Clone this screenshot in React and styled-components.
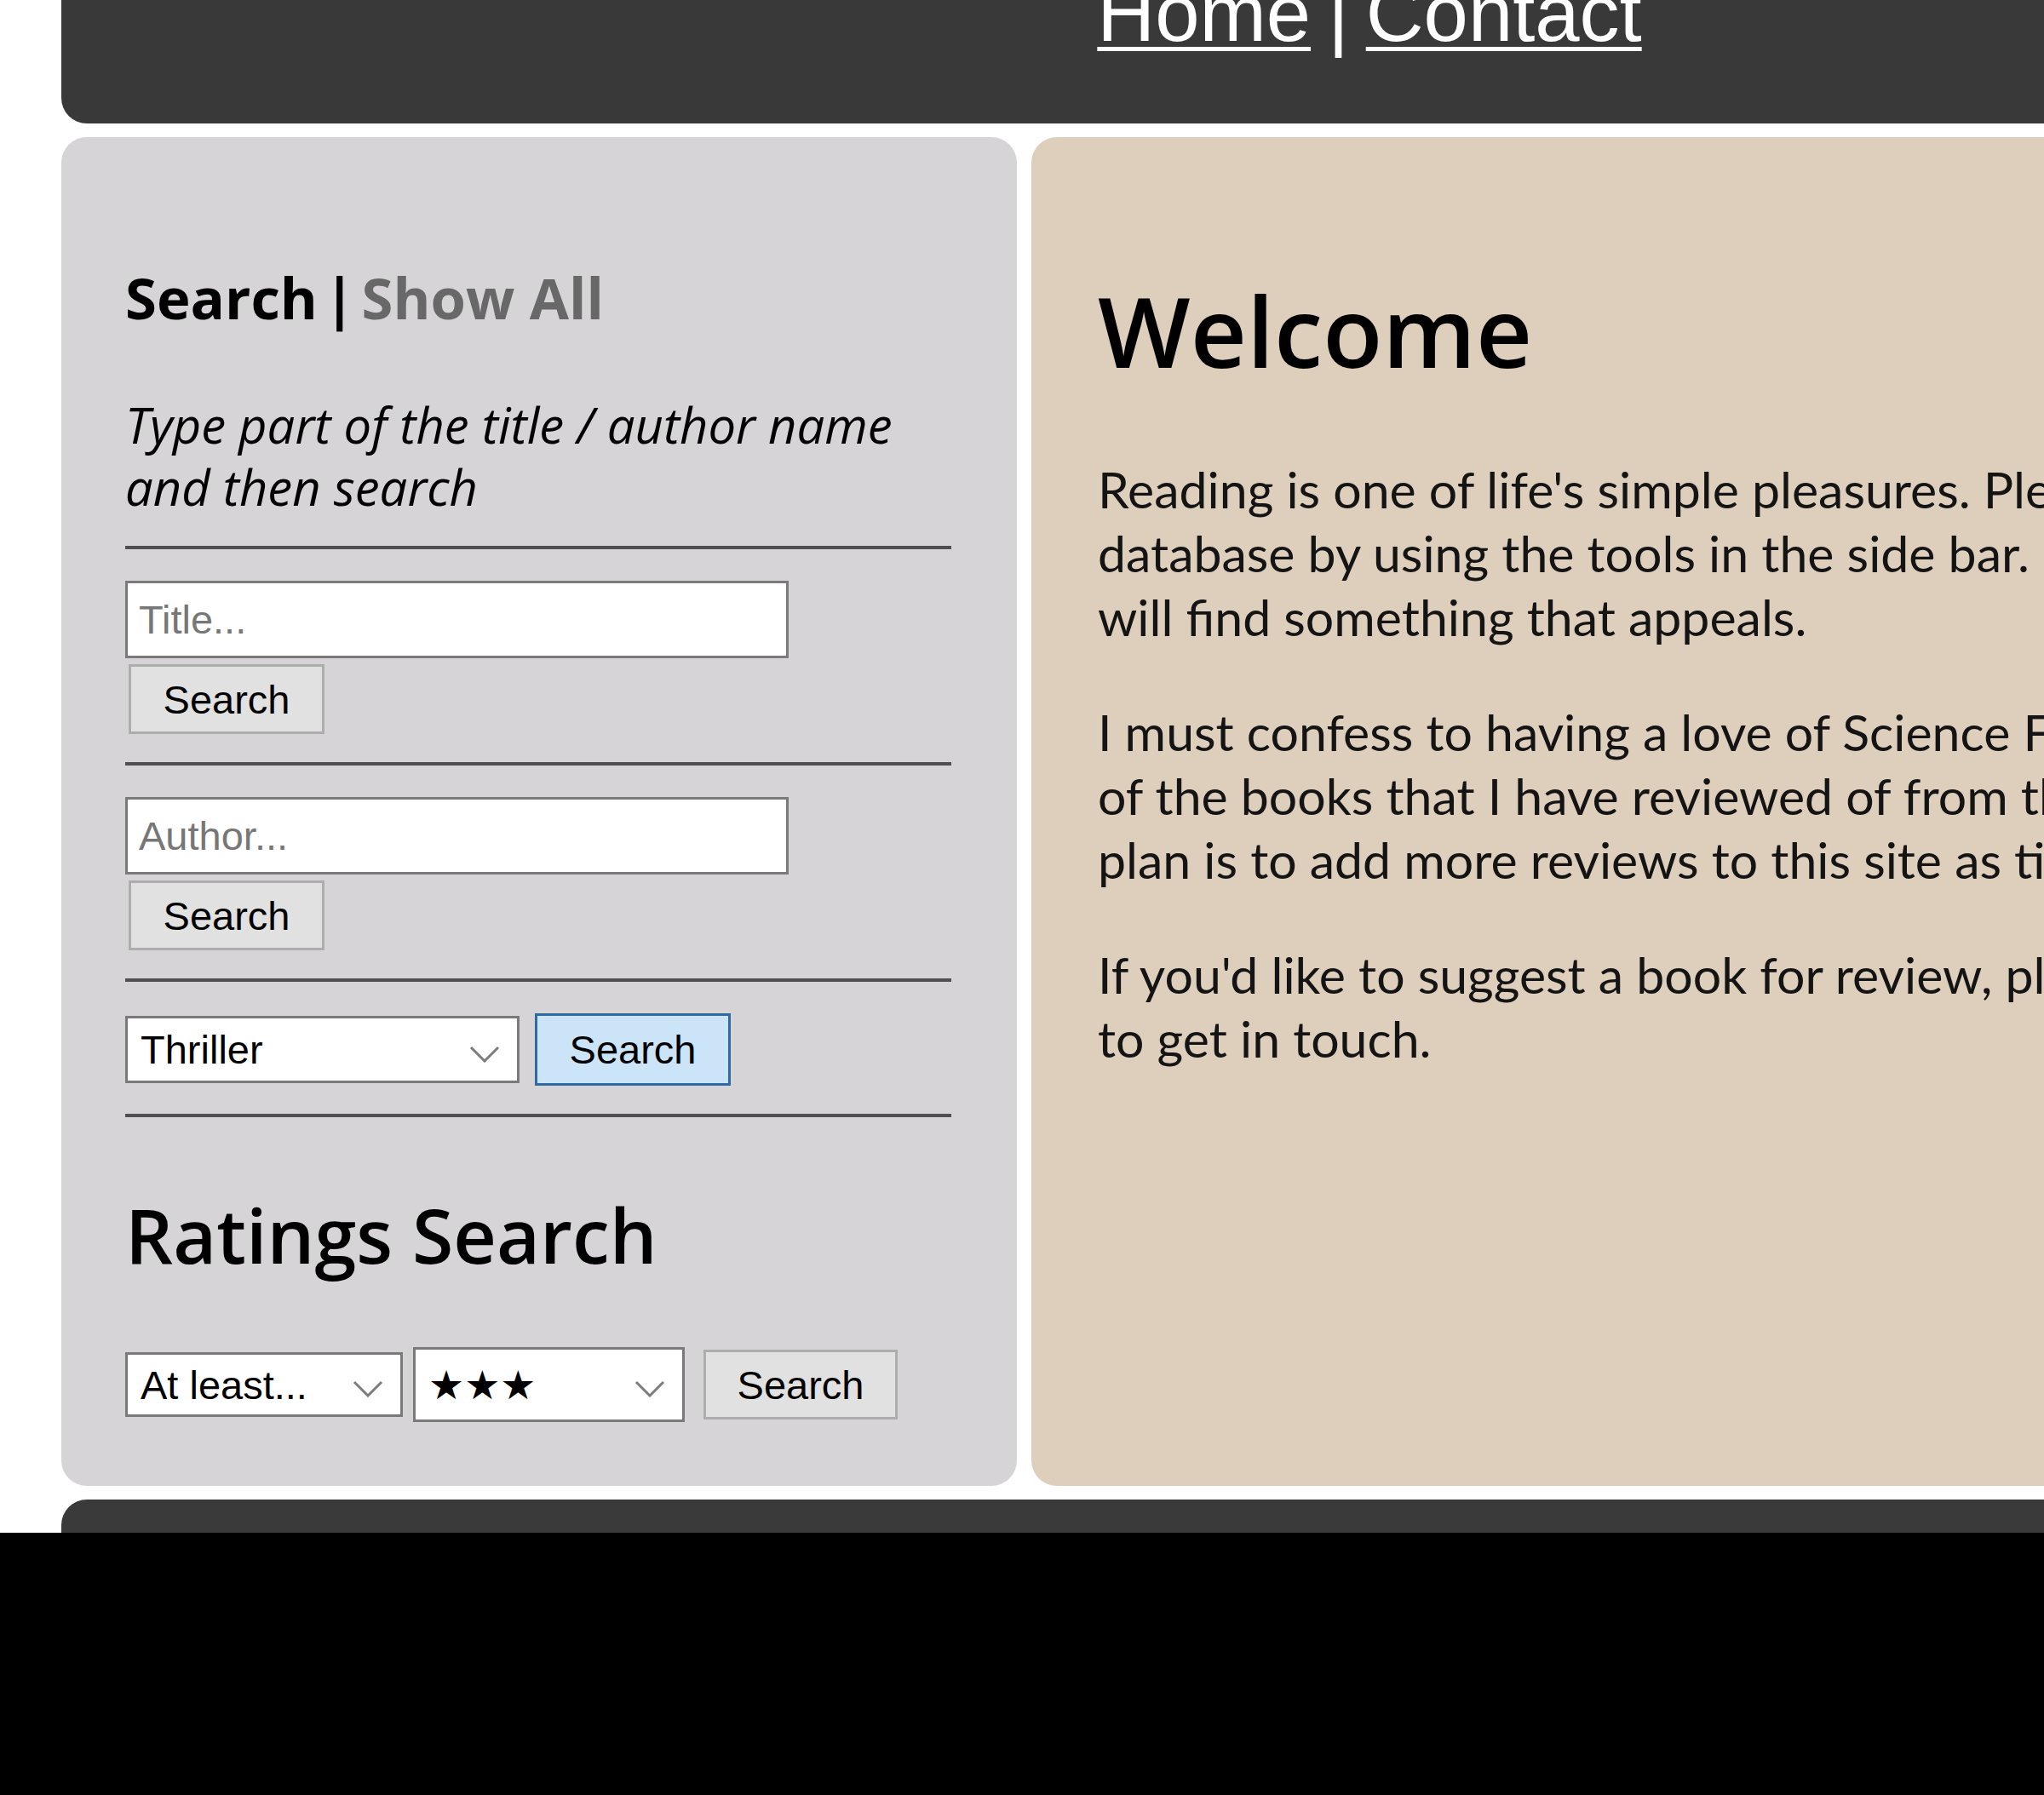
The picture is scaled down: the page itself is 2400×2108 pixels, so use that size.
import React from "react";
import styled, { createGlobalStyle } from "styled-components";

const GlobalStyle = createGlobalStyle`
  html, body {
    margin: 0;
    padding: 0;
    background: #fff;
    overflow: hidden;
  }
`;

const Screen = styled.div`
  width: 2400px;
  height: 2108px;
  display: flex;
  flex-direction: column;
  overflow: hidden;
`;

const Viewport = styled.div`
  flex: 1;
  overflow: hidden;
  background: #fff;
`;

const Letterbox = styled.div`
  height: 308px;
  background: #000;
`;

const Page = styled.div`
  width: 3072px;
  margin: -75px 0 0 72px;
  display: flex;
  flex-direction: column;
  gap: 16px;
`;

const Header = styled.header`
  height: 220px;
  box-sizing: border-box;
  padding-top: 44px;
  background: #393939;
  border-radius: 0 0 30px 30px;
  text-align: center;
  color: #fff;
  font-family: "Liberation Sans", Arial, sans-serif;
  font-size: 94px;
  line-height: 94px;
  word-spacing: -6px;
`;

const NavLink = styled.a`
  color: #fff;
  text-decoration: underline;
  text-decoration-thickness: 5px;
  text-underline-offset: 7px;
`;

const Columns = styled.div`
  display: flex;
  gap: 17px;
  align-items: stretch;
`;

const Sidebar = styled.aside`
  flex: none;
  width: 1122px;
  box-sizing: border-box;
  padding: 148px 77px 75px 75px;
  background: #d6d4d7;
  border-radius: 30px;
  display: flex;
  flex-direction: column;
`;

const SideTitle = styled.h3`
  margin: 0;
  font-family: "Open Sans", sans-serif;
  font-weight: 700;
  font-size: 67px;
  line-height: 80px;
  word-spacing: -10px;
  color: #000;
`;

const ShowAll = styled.a`
  color: #686868;
  text-decoration: none;
  word-spacing: 0;
`;

const Hint = styled.p`
  margin: 73px 0 0;
  font-family: "Open Sans", sans-serif;
  font-style: italic;
  font-size: 58px;
  line-height: 73px;
  color: #000;
`;

const Rule = styled.hr`
  border: 0;
  height: 4px;
  margin: 33px 0 37px;
  background: #4f4f4f;
`;

const TextField = styled.input`
  width: 779px;
  height: 91px;
  box-sizing: border-box;
  padding: 0 13px;
  border: 3px solid #7a7a7a;
  background: #fff;
  font-family: "Liberation Sans", Arial, sans-serif;
  font-size: 47px;
  color: #000;
  outline: none;

  &::placeholder {
    color: #777;
  }
`;

const Button = styled.button`
  width: ${(p) => p.$width || 230}px;
  height: ${(p) => (p.$active ? 85 : 82)}px;
  box-sizing: border-box;
  margin: ${(p) => p.$margin || "0"};
  padding: 0;
  border: 3px solid ${(p) => (p.$active ? "#2f6aa3" : "#adadad")};
  background: ${(p) => (p.$active ? "#cce4f7" : "#e1e1e1")};
  font-family: "Liberation Sans", Arial, sans-serif;
  font-size: 47px;
  color: #000;
  cursor: pointer;
`;

const FieldStack = styled.div`
  display: flex;
  flex-direction: column;
  align-items: flex-start;
  gap: 7px;
`;

const ControlRow = styled.div`
  display: flex;
  align-items: center;
  gap: ${(p) => p.$gap || 12}px;
  margin-top: ${(p) => p.$top || 0}px;
`;

const Dropdown = styled.div`
  flex: none;
  width: ${(p) => p.$width}px;
  height: ${(p) => p.$height}px;
  box-sizing: border-box;
  display: flex;
  align-items: center;
  border: 3px solid #7a7a7a;
  background: #fff;
`;

const DropdownSelect = styled.select`
  flex: 1;
  min-width: 0;
  height: 100%;
  padding: 0 0 0 15px;
  border: 0;
  background: transparent;
  appearance: none;
  outline: none;
  font-family: "Liberation Sans", "DejaVu Sans", Arial, sans-serif;
  font-size: 47px;
  color: #000;
`;

const Chevron = styled.svg`
  flex: none;
  width: 36px;
  height: 20px;
  margin: 10px 20px 0 0;
`;

const RatingsTitle = styled.h2`
  margin: 51px 0 0;
  font-family: "Open Sans", sans-serif;
  font-weight: 600;
  font-size: 88px;
  line-height: 100px;
  color: #000;
`;

const Main = styled.main`
  flex: 1;
  min-width: 0;
  box-sizing: border-box;
  padding: 162px 78px;
  background: #decfbd;
  border-radius: 30px;
  overflow: hidden;
`;

const Welcome = styled.h1`
  margin: 0 0 84px;
  font-family: "Open Sans", sans-serif;
  font-weight: 600;
  font-size: 115px;
  line-height: 130px;
  color: #000;
`;

const Para = styled.p`
  margin: 0;
  font-family: Lato, sans-serif;
  font-size: 59px;
  line-height: 75px;
  color: #141414;
  white-space: nowrap;

  & + & {
    margin-top: 60px;
  }
`;

const Footer = styled.footer`
  height: 200px;
  background: #3a3a3a;
  border-radius: 30px 30px 0 0;
`;

const Select = ({ width, height, value, options }) => (
  <Dropdown $width={width} $height={height}>
    <DropdownSelect defaultValue={value}>
      {options.map((o) => (
        <option key={o}>{o}</option>
      ))}
    </DropdownSelect>
    <Chevron viewBox="0 0 36 20">
      <path d="M2 2 L18 18 L34 2" fill="none" stroke="#7c7c7c" strokeWidth="3" />
    </Chevron>
  </Dropdown>
);

const genres = ["Thriller", "Science Fiction", "Fantasy", "Crime", "Horror"];
const comparisons = ["At least...", "At most...", "Exactly..."];
const stars = ["★", "★★", "★★★", "★★★★", "★★★★★"];

const App = () => {
  return (
    <>
      <GlobalStyle />
      <Screen>
        <Viewport>
          <Page>
            <Header>
              <NavLink href="#">Home</NavLink> | <NavLink href="#">Contact</NavLink>
            </Header>

            <Columns>
              <Sidebar>
                <SideTitle>
                  Search | <ShowAll href="#">Show All</ShowAll>
                </SideTitle>
                <Hint>
                  Type part of the title / author name
                  <br />
                  and then search
                </Hint>

                <Rule />
                <FieldStack>
                  <TextField placeholder="Title..." />
                  <Button $margin="0 0 0 4px">Search</Button>
                </FieldStack>

                <Rule />
                <FieldStack>
                  <TextField placeholder="Author..." />
                  <Button $margin="0 0 0 4px">Search</Button>
                </FieldStack>

                <Rule />
                <ControlRow $gap={18}>
                  <Select width={463} height={79} value="Thriller" options={genres} />
                  <Button $active>Search</Button>
                </ControlRow>
                <Rule />

                <RatingsTitle>Ratings Search</RatingsTitle>
                <ControlRow $top={82}>
                  <Select width={326} height={76} value="At least..." options={comparisons} />
                  <Select width={319} height={88} value="★★★" options={stars} />
                  <Button $width={228} $margin="0 0 0 10px">
                    Search
                  </Button>
                </ControlRow>
              </Sidebar>

              <Main>
                <Welcome>Welcome</Welcome>
                <Para>
                  Reading is one of life's simple pleasures. Please browse the
                  <br />
                  database by using the tools in the side bar. I hope you
                  <br />
                  will find something that appeals.
                </Para>
                <Para>
                  I must confess to having a love of Science Fiction and most
                  <br />
                  of the books that I have reviewed of from that genre. My
                  <br />
                  plan is to add more reviews to this site as time permits.
                </Para>
                <Para>
                  If you'd like to suggest a book for review, please use the contact page
                  <br />
                  to get in touch.
                </Para>
              </Main>
            </Columns>

            <Footer />
          </Page>
        </Viewport>
        <Letterbox />
      </Screen>
    </>
  );
};

export default App;
